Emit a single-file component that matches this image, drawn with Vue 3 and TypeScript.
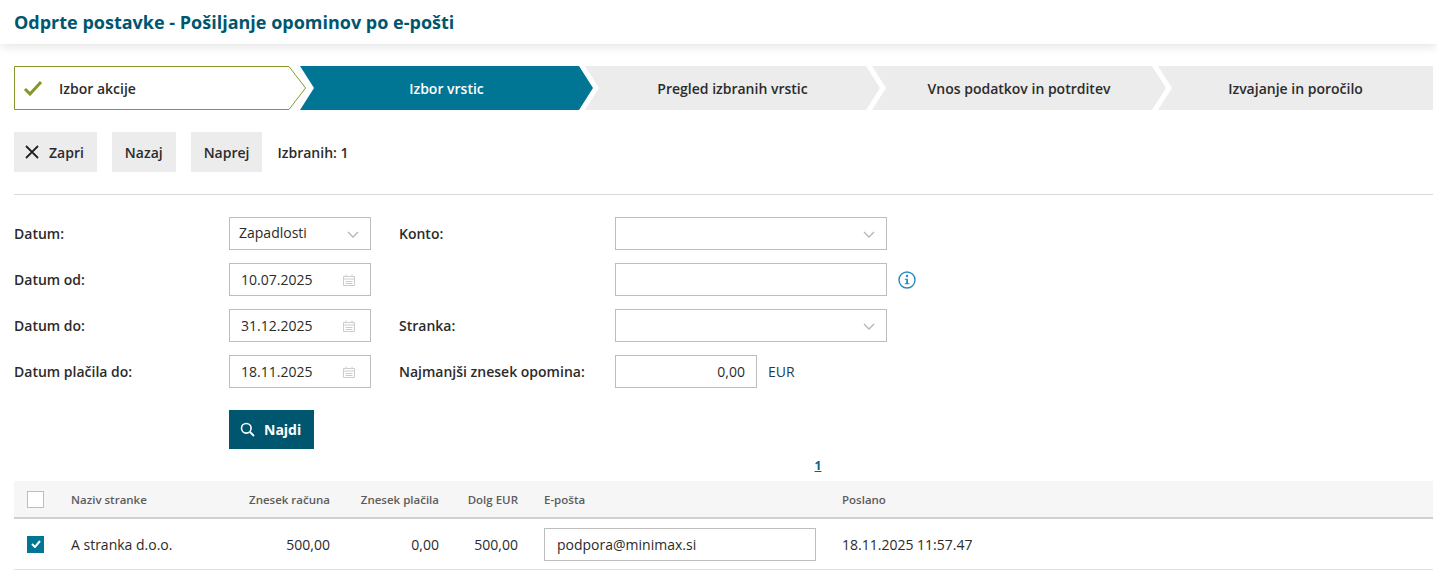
<script setup lang="ts">
const steps = [
  { label: 'Izbor vrstic', state: 'active', w: 293 },
  { label: 'Pregled izbranih vrstic', state: '', w: 295 },
  { label: 'Vnos podatkov in potrditev', state: '', w: 294 },
  { label: 'Izvajanje in poročilo', state: '', w: 275 },
]
</script>

<template>
  <div class="page">
    <header class="top"><h1>Odprte postavke - Pošiljanje opominov po e-pošti</h1></header>
    <main class="body">
      <nav class="steps">
        <div class="step done">
          <svg class="done-shape" width="293" height="44" viewBox="0 0 293 44">
            <path d="M0.5 0.5H275L291.500 22L275 43.500H0.5Z" fill="#fff" stroke="#83982b" />
          </svg>
          <svg class="tick" width="20" height="16" viewBox="0 0 20 16"><path d="M2 9l5 5L18 2" fill="none" stroke="#83982b" stroke-width="3" /></svg>
          <span>Izbor akcije</span>
        </div>
        <div v-for="s in steps" :key="s.label" class="step" :class="s.state" :style="{ width: s.w + 'px' }">
          <span>{{ s.label }}</span>
        </div>
      </nav>

      <div class="toolbar">
        <button class="btn first">
          <svg width="16" height="16" viewBox="0 0 16 16"><path d="M2 2l12 12M14 2L2 14" stroke="#222" stroke-width="1.800" fill="none" /></svg>
          Zapri
        </button>
        <button class="btn">Nazaj</button>
        <button class="btn">Naprej</button>
        <span class="count">Izbranih: 1</span>
      </div>

      <div class="form">
        <label>Datum:</label>
        <div class="field w142 sel"><span class="zap">Zapadlosti</span><svg class="chev" width="12" height="7" viewBox="0 0 12 7"><path d="M1 1l5 5 5-5" fill="none" stroke="#b5b5b5" stroke-width="1.300" /></svg></div>
        <label>Konto:</label>
        <div class="field w272 sel"><svg class="chev" width="12" height="7" viewBox="0 0 12 7"><path d="M1 1l5 5 5-5" fill="none" stroke="#b5b5b5" stroke-width="1.300" /></svg></div>

        <label>Datum od:</label>
        <div class="field w142 date"><span>10.07.2025</span><svg class="cal" width="14" height="13" viewBox="0 0 14 13"><path d="M1.500 2.500h11v9h-11zM1.500 5h11M3.500 7.500h7M3.500 9.500h7M4 .5v2M10 .5v2" fill="none" stroke="#ccc" /></svg></div>
        <span></span>
        <div class="with-info">
          <div class="field w272"></div>
          <svg class="info" width="18" height="18" viewBox="0 0 18 18"><circle cx="9" cy="9" r="8" fill="none" stroke="#2a8ac4" stroke-width="1.400" /><circle cx="9" cy="5" r="1.200" fill="#2a8ac4" /><path d="M6.800 7.800H10v4.400h1.400v1H6.800v-1h1.400V8.800H6.800z" fill="#2a8ac4" /></svg>
        </div>

        <label>Datum do:</label>
        <div class="field w142 date"><span>31.12.2025</span><svg class="cal" width="14" height="13" viewBox="0 0 14 13"><path d="M1.500 2.500h11v9h-11zM1.500 5h11M3.500 7.500h7M3.500 9.500h7M4 .5v2M10 .5v2" fill="none" stroke="#ccc" /></svg></div>
        <label>Stranka:</label>
        <div class="field w272 sel"><svg class="chev" width="12" height="7" viewBox="0 0 12 7"><path d="M1 1l5 5 5-5" fill="none" stroke="#b5b5b5" stroke-width="1.300" /></svg></div>

        <label>Datum plačila do:</label>
        <div class="field w142 date"><span>18.11.2025</span><svg class="cal" width="14" height="13" viewBox="0 0 14 13"><path d="M1.500 2.500h11v9h-11zM1.500 5h11M3.500 7.500h7M3.500 9.500h7M4 .5v2M10 .5v2" fill="none" stroke="#ccc" /></svg></div>
        <label>Najmanjši znesek opomina:</label>
        <div class="with-eur">
          <div class="field w142 amount">0,00</div>
          <span>EUR</span>
        </div>
      </div>

      <button class="find">
        <svg width="15" height="15" viewBox="0 0 15 15"><circle cx="6.300" cy="6.300" r="4.800" fill="none" stroke="#fff" stroke-width="1.600" /><path d="M10 10l4 4" stroke="#fff" stroke-width="1.800" /></svg>
        Najdi
      </button>

      <div class="pager"><a>1</a></div>

      <div class="table">
        <div class="row head">
          <div class="c-check"><span class="box"></span></div>
          <div class="c-name">Naziv stranke</div>
          <div class="c-n1">Znesek računa</div>
          <div class="c-n2">Znesek plačila</div>
          <div class="c-n3">Dolg EUR</div>
          <div class="c-mail">E-pošta</div>
          <div class="c-sent">Poslano</div>
        </div>
        <div class="row data">
          <div class="c-check"><span class="box on"><svg width="10" height="8" viewBox="0 0 10 8"><path d="M1 4l3 3 5-6" fill="none" stroke="#fff" stroke-width="2" /></svg></span></div>
          <div class="c-name">A stranka d.o.o.</div>
          <div class="c-n1">500,00</div>
          <div class="c-n2">0,00</div>
          <div class="c-n3">500,00</div>
          <div class="c-mail"><div class="mail">podpora@minimax.si</div></div>
          <div class="c-sent">18.11.2025 11:57.47</div>
        </div>
      </div>
    </main>
  </div>
</template>

<style>
html, body { margin: 0; background: #fff; overflow: hidden; }
</style>

<style scoped>
.page { width: 1437px; height: 570px; overflow: hidden; font-family: "Open Sans", sans-serif; font-size: 14px; color: #2b2b2b; }
.top { height: 44px; box-shadow: 0 2px 10px rgba(0,0,0,.12); display: flex; align-items: center; padding-left: 14px; }
.top h1 { margin: 0 0 1px; font-size: 18px; font-weight: 700; color: #00566e; line-height: 44px; }
.body { padding: 22px 4px 0 14px; }
.steps { display: flex; height: 44px; margin-right: 0; }
.step { position: relative; height: 44px; flex: none; display: flex; align-items: center; justify-content: center; font-weight: 600; margin-right: -8px; background: #ececec; clip-path: polygon(0 0, calc(100% - 14px) 0, 100% 50%, calc(100% - 14px) 100%, 0 100%, 14px 50%); }
.step:last-child { clip-path: polygon(0 0, 100% 0, 100% 100%, 0 100%, 14px 50%); }
.step.active { background: #007594; color: #fff; }
.step.done { width: 293px; background: none; clip-path: none; justify-content: flex-start; font-weight: 600; margin-right: -7px; }
.done-shape { position: absolute; left: 0; top: 0; }
.tick { position: absolute; left: 9px; top: 14px; }
.step.done span { position: relative; margin-left: 45px; }
.toolbar { display: flex; align-items: center; margin-top: 22px; padding-bottom: 22px; border-bottom: 1px solid #d9d9d9; height: 40px; }
.btn { height: 40px; border: 0; background: #ececec; font: 600 14px "Open Sans", sans-serif; color: #2b2b2b; padding: 0 13px; margin-right: 15px; display: flex; align-items: center; gap: 9px; }
.btn.first { padding: 0 13px 0 10px; }
.count { font-weight: 600; }
.form { display: grid; grid-template-columns: 215px 170px 216px 1fr; grid-auto-rows: 33px; row-gap: 13px; margin-top: 22px; align-items: center; }
label { font-weight: 600; }
.field { box-sizing: border-box; height: 33px; border: 1px solid #bdbdbd; background: #fff; display: flex; align-items: center; position: relative; }
.w142 { width: 142px; }
.w272 { width: 272px; }
.zap { padding-left: 9px; margin-top: -2px; }
.date { padding-left: 11px; }
.chev { position: absolute; right: 11px; top: 13px; }
.cal { position: absolute; right: 14px; top: 10px; }
.with-info { display: flex; align-items: center; gap: 11px; }
.info { display: block; }
.with-eur { display: flex; align-items: center; gap: 11px; font-size: 14px; color: #1f3a4d; }
.amount { justify-content: flex-end; padding-right: 11px; color: #2b2b2b; }
.find { display: flex; align-items: center; gap: 9px; margin: 22px 0 0 215px; width: 85px; height: 39px; padding: 0 0 0 11px; background: #00566e; border: 0; color: #fff; font: 700 14px "Open Sans", sans-serif; }
.pager { text-align: center; width: 1608px; height: 32px; font-size: 12px; font-weight: 700; line-height: 34px; }
.pager a { color: #00667f; text-decoration: underline; }
.table { margin-top: 0; }
.row { display: flex; align-items: center; }
.head { height: 36px; background: #f6f6f6; border-bottom: 2px solid #d0d0d0; font-size: 11.500px; font-weight: 600; color: #5c5c5c; }
.data { height: 50px; border-bottom: 1px solid #e2e2e2; font-size: 14px; }
.c-check { width: 57px; padding-left: 13px; box-sizing: border-box; display: flex; }
.box { width: 17px; height: 17px; box-sizing: border-box; border: 1px solid #bdbdbd; background: #fff; display: flex; align-items: center; justify-content: center; }
.box.on { background: #007594; border-color: #007594; }
.c-name { width: 130px; }
.c-n1 { width: 129px; text-align: right; }
.c-n2 { width: 109px; text-align: right; }
.c-n3 { width: 79px; text-align: right; }
.c-mail { width: 298px; margin-left: 26px; }
.c-sent { flex: 1; }
.mail { box-sizing: border-box; width: 272px; height: 33px; border: 1px solid #bdbdbd; display: flex; align-items: center; padding-left: 12px; }
</style>
